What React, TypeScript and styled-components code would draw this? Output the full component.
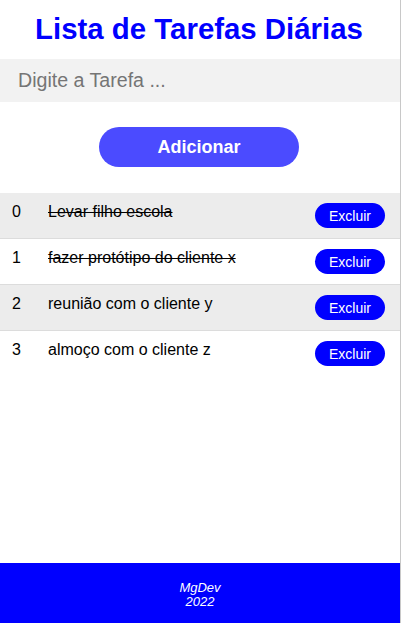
import React from "react";
import styled, { createGlobalStyle } from "styled-components";

const Global = createGlobalStyle`
  html, body { margin: 0; padding: 0; background: #fff; }
  body { font-family: "Liberation Sans", Arial, sans-serif; }
  * { box-sizing: border-box; }
`;

const Page = styled.div`
  width: 401px;
  height: 623px;
  border-right: 1px solid #c8c8c8;
  display: flex;
  flex-direction: column;
  font-family: "Liberation Sans", Arial, sans-serif;
`;

const Main = styled.main`
  flex: 1;
  display: flex;
  flex-direction: column;
`;

const Title = styled.h1`
  margin: 0;
  height: 59px;
  display: flex;
  align-items: center;
  justify-content: center;
  color: #0000ff;
  font-size: 29.4px;
  font-weight: bold;
  padding: 0 2px 2px 0;
`;

const Input = styled.input`
  width: 100%;
  height: 43px;
  border: none;
  outline: none;
  background: #f2f2f2;
  padding: 0 18px;
  font-family: "Liberation Sans", Arial, sans-serif;
  font-size: 19.6px;
  color: #222;
  &::placeholder { color: #757575; }
`;

const AddRow = styled.div`
  display: flex;
  justify-content: center;
  padding: 25px 2px 26px 0;
`;

const AddButton = styled.button`
  width: 200px;
  height: 40px;
  border: none;
  border-radius: 20px;
  background: #4b4bff;
  color: #fff;
  font-family: "Liberation Sans", Arial, sans-serif;
  font-size: 18px;
  font-weight: bold;
  cursor: pointer;
`;

const List = styled.ul`
  list-style: none;
  margin: 0;
  padding: 0;
`;

const Item = styled.li<{ $shaded: boolean }>`
  display: flex;
  align-items: flex-start;
  padding: 10px 15px 10px 12px;
  background: ${(p) => (p.$shaded ? "#ececec" : "#fff")};
  border-bottom: 1px solid #dcdcdc;
  font-size: 16px;
  color: #000;
  &:last-child { border-bottom: none; }
`;

const Num = styled.span`
  width: 36px;
  line-height: 18px;
`;

const Text = styled.span<{ $done: boolean }>`
  flex: 1;
  line-height: 18px;
  text-decoration: ${(p) => (p.$done ? "line-through" : "none")};
`;

const DelButton = styled.button`
  width: 70px;
  height: 25px;
  border: none;
  border-radius: 13px;
  background: #0000ff;
  color: #fff;
  font-family: "Liberation Sans", Arial, sans-serif;
  font-size: 14px;
  padding: 0;
  cursor: pointer;
`;

const Footer = styled.footer`
  height: 60px;
  background: #0000ff;
  color: #fff;
  display: flex;
  flex-direction: column;
  align-items: center;
  justify-content: center;
  font-style: italic;
  font-size: 13px;
  line-height: 14px;
  padding-top: 4px;
`;

const tasks = [
  { text: "Levar filho escola", done: true },
  { text: "fazer protótipo do cliente x", done: true },
  { text: "reunião com o cliente y", done: false },
  { text: "almoço com o cliente z", done: false },
];

export default function App() {
  return (
    <>
      <Global />
      <Page>
        <Main>
          <Title>Lista de Tarefas Diárias</Title>
          <Input placeholder="Digite a Tarefa ..." />
          <AddRow>
            <AddButton>Adicionar</AddButton>
          </AddRow>
          <List>
            {tasks.map((t, i) => (
              <Item key={i} $shaded={i % 2 === 0}>
                <Num>{i}</Num>
                <Text $done={t.done}>{t.text}</Text>
                <DelButton>Excluir</DelButton>
              </Item>
            ))}
          </List>
        </Main>
        <Footer>
          <span>MgDev</span>
          <span>2022</span>
        </Footer>
      </Page>
    </>
  );
}
